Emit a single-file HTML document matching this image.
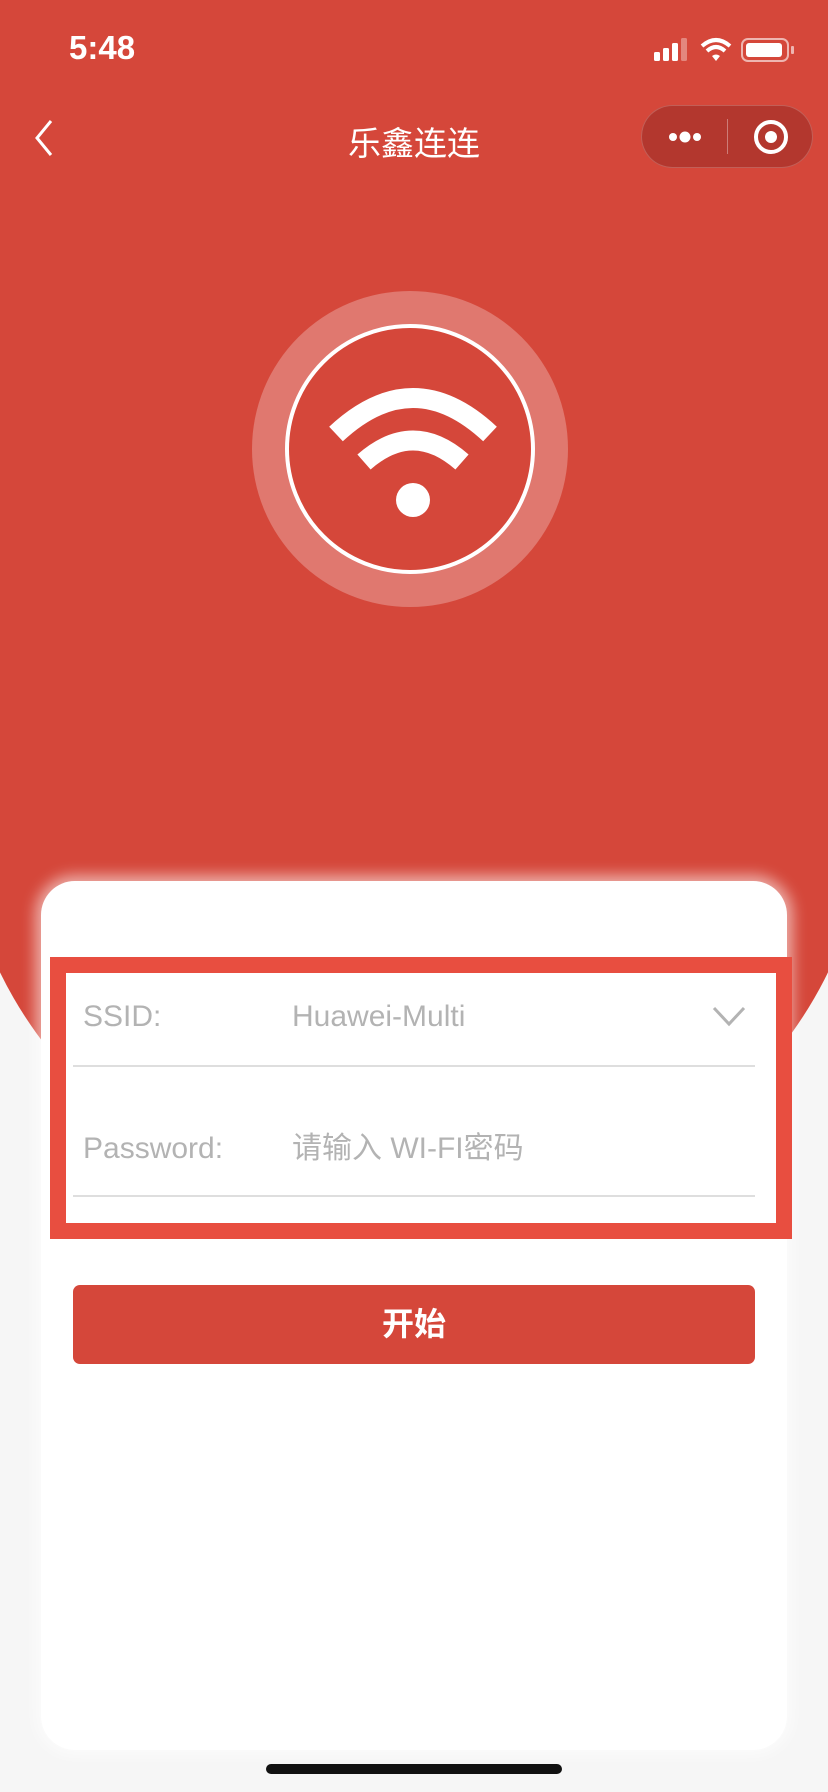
<!DOCTYPE html>
<html><head><meta charset="utf-8"><style>
*{margin:0;padding:0;box-sizing:border-box}
body{width:828px;height:1792px;background:#f6f6f6;position:relative;overflow:hidden;font-family:"Liberation Sans","Noto Sans CJK SC",sans-serif}
.red{position:absolute;left:-40px;top:-400px;width:908px;height:1620px;background:#d5473a;border-radius:0 0 50% 50%/0 0 420px 420px}
.abs{position:absolute}
.card{position:absolute;left:41px;top:881px;width:746px;height:869px;background:#fff;border-radius:34px;box-shadow:0 0 14px 6px rgba(255,255,255,.55)}
.lbl{position:absolute;font-size:30px;color:#b3b3b3;line-height:40px;height:40px}
</style></head><body>
<div class="red"></div>
<div class="abs" style="left:69px;top:29px;color:#fff;font-size:33px;font-weight:bold">5:48</div>
<svg class="abs" style="left:650px;top:36px" width="165" height="30" viewBox="0 0 165 30">
<rect x="4" y="16" width="6" height="9" rx="1.5" fill="#fff"/><rect x="13" y="12" width="6" height="13" rx="1.5" fill="#fff"/><rect x="22" y="7" width="6" height="18" rx="1.5" fill="#fff"/><rect x="31" y="2" width="6" height="23" rx="1.5" fill="rgba(255,255,255,.35)"/>
<path d="M52 10 Q66 -2 80 10" stroke="#fff" stroke-width="4" fill="none"/><path d="M57 15 Q66 7 75 15" stroke="#fff" stroke-width="4" fill="none"/><path d="M62 20 L66 25 L70 20 Q66 17 62 20Z" fill="#fff"/>
<rect x="92" y="3" width="46" height="22" rx="6" fill="none" stroke="rgba(255,255,255,.6)" stroke-width="2"/><rect x="96" y="7" width="36" height="14" rx="3" fill="#fff"/><rect x="141" y="10" width="3" height="8" rx="1" fill="rgba(255,255,255,.6)"/>
</svg>
<svg class="abs" style="left:30px;top:118px" width="26" height="40"><path d="M21 3 L7 20 L21 37" stroke="#fff" stroke-width="3" fill="none"/></svg>
<div class="abs" style="left:0;width:828px;top:117px;text-align:center;color:#fff;font-size:33px">乐鑫连连</div>
<div class="abs" style="left:641px;top:105px;width:172px;height:63px;border-radius:32px;background:#b3372e;border:1px solid rgba(255,255,255,.2)"></div>
<div class="abs" style="left:727px;top:119px;width:1px;height:35px;background:rgba(255,255,255,.35)"></div>
<svg class="abs" style="left:665px;top:125px" width="50" height="24"><circle cx="8" cy="12" r="4" fill="#fff"/><circle cx="20" cy="12" r="5.5" fill="#fff"/><circle cx="32" cy="12" r="4" fill="#fff"/></svg>
<svg class="abs" style="left:750px;top:116px" width="42" height="42"><circle cx="21" cy="21" r="15" stroke="#fff" stroke-width="4" fill="none"/><circle cx="21" cy="21" r="6" fill="#fff"/></svg>
<svg class="abs" style="left:250px;top:290px" width="320" height="320" viewBox="0 0 320 320">
<circle cx="160" cy="159" r="158" fill="rgba(255,255,255,.27)"/>
<circle cx="160" cy="159" r="123" fill="#d5473a" stroke="#fff" stroke-width="4"/>
<path d="M86 144 Q163 72 240 144" stroke="#fff" stroke-width="20" fill="none"/>
<path d="M114 172 Q163 129 212 172" stroke="#fff" stroke-width="20" fill="none"/>
<circle cx="163" cy="210" r="17" fill="#fff"/>
</svg>
<div class="card"></div>
<div class="abs" style="left:50px;top:957px;width:742px;height:282px;border:16px solid #e84e40;background:#fff"></div>
<div class="lbl" style="left:83px;top:997px">SSID:</div>
<div class="lbl" style="left:292px;top:997px">Huawei-Multi</div>
<svg class="abs" style="left:711px;top:1004px" width="36" height="24"><path d="M3 4 L18 20 L33 4" stroke="#b3b3b3" stroke-width="3" fill="none"/></svg>
<div class="abs" style="left:73px;top:1065px;width:682px;height:2px;background:#dedede"></div>
<div class="lbl" style="left:83px;top:1129px">Password:</div>
<div class="lbl" style="left:292px;top:1129px">请输入 WI-FI密码</div>
<div class="abs" style="left:73px;top:1195px;width:682px;height:2px;background:#dedede"></div>
<div class="abs" style="left:73px;top:1285px;width:682px;height:79px;border-radius:7px;background:#d5473a;color:#fff;font-size:32px;font-weight:bold;text-align:center;line-height:79px">开始</div>
<div class="abs" style="left:266px;top:1764px;width:296px;height:10px;border-radius:5px;background:#111"></div>
</body></html>
